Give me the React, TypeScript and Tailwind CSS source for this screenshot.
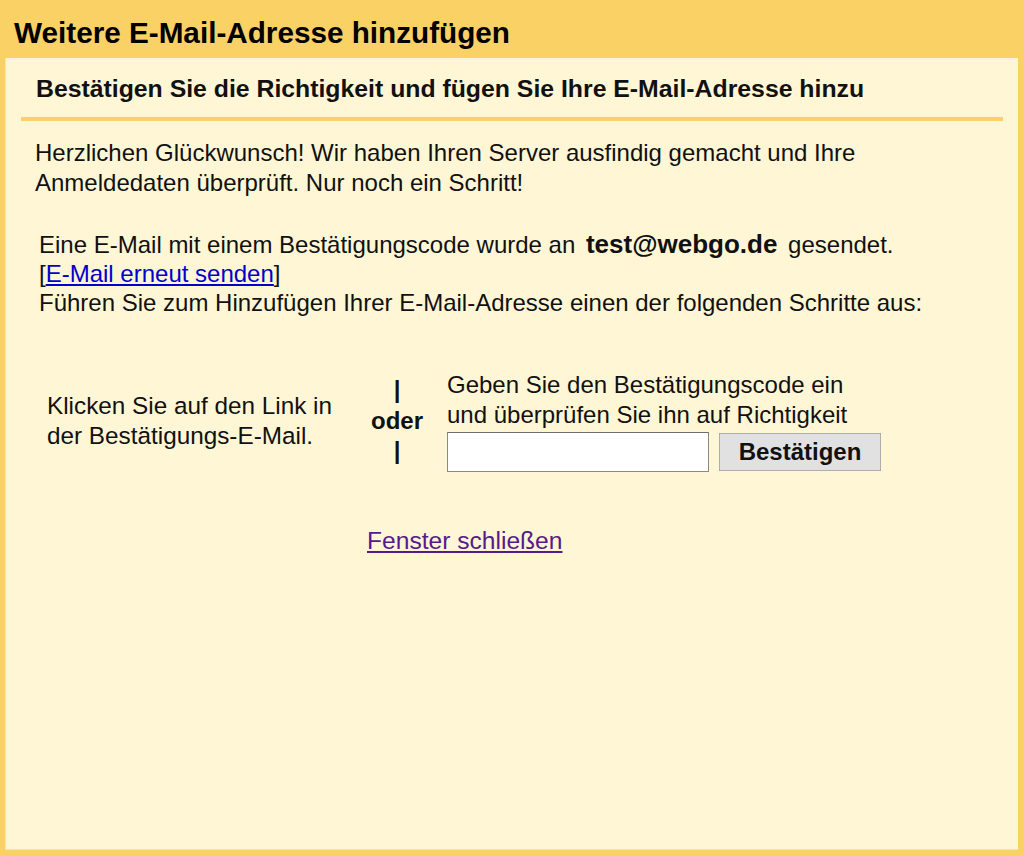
import React from "react";

export default function App() {
  return (
    <div
      className="w-[1024px] h-[856px] bg-[#fad165] flex flex-col"
      style={{ fontFamily: '"Liberation Sans", Arial, sans-serif' }}
    >
      <div className="h-[58px] shrink-0 flex items-center pl-[14px] pt-[8px]">
        <h1 className="text-[29.7px] font-bold text-black leading-none">Weitere E-Mail-Adresse hinzufügen</h1>
      </div>
      <div className="flex-1 ml-[5px] mr-[6px] mb-[6px] bg-[#fff6d6] border border-[#fbe4a0] border-t-0 border-r-0 flex flex-col text-[24px] text-[#111] leading-[29px]">
        <div className="mx-[15px] border-b-[4px] border-[#fad165] pt-[16px] pb-[14px] pl-[15px]">
          <div className="font-bold text-[24.8px] leading-[29px]">Bestätigen Sie die Richtigkeit und fügen Sie Ihre E-Mail-Adresse hinzu</div>
        </div>
        <div className="pl-[29px] pt-[17px] leading-[30px]">
          <p>
            Herzlichen Glückwunsch! Wir haben Ihren Server ausfindig gemacht und Ihre
            <br />
            Anmeldedaten überprüft. Nur noch ein Schritt!
          </p>
        </div>
        <div className="pl-[33px] pt-[32px]">
          <div>
            Eine E-Mail mit einem Bestätigungscode wurde an <span className="font-bold text-[26px] mx-[4px]">test@webgo.de</span> gesendet.
          </div>
          <div>
            [<a href="#" className="text-[#0000cc] underline">E-Mail erneut senden</a>]
          </div>
          <div>Führen Sie zum Hinzufügen Ihrer E-Mail-Adresse einen der folgenden Schritte aus:</div>
        </div>
        <div className="flex items-center pl-[41px] pt-[53px]">
          <div className="w-[300px] leading-[30px] text-[24.3px]">
            Klicken Sie auf den Link in
            <br />
            der Bestätigungs-E-Mail.
          </div>
          <div className="w-[100px] flex flex-col items-center font-bold leading-[30.5px]">
            <span>|</span>
            <span>oder</span>
            <span>|</span>
          </div>
          <div className="flex flex-col leading-[30px]">
            <div>Geben Sie den Bestätigungscode ein</div>
            <div>und überprüfen Sie ihn auf Richtigkeit</div>
            <div className="flex items-center gap-[10px] mt-[2px]">
              <input
                type="text"
                className="w-[262px] h-[40px] bg-white border border-[#8a8a8a] border-t-[#6e6e6e] outline-none px-1"
              />
              <button className="w-[162px] h-[38px] bg-[#e1e1e1] border border-[#adadad] font-bold text-[24px] leading-none text-[#111]">
                Bestätigen
              </button>
            </div>
          </div>
        </div>
        <div className="pl-[361px] pt-[54px]">
          <a href="#" className="text-[#551a8b] underline text-[24.6px]">Fenster schließen</a>
        </div>
      </div>
    </div>
  );
}
